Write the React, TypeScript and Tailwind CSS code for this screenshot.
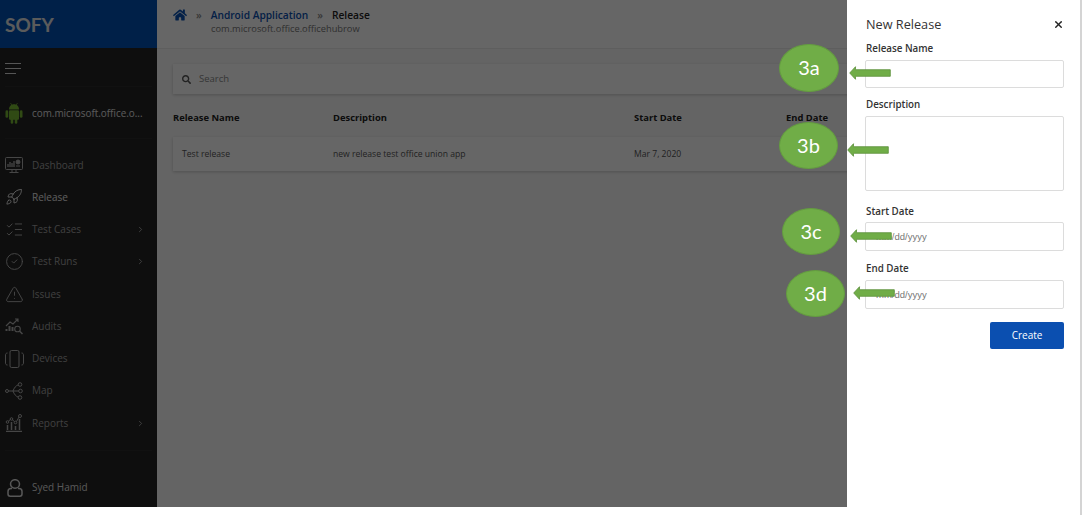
import React from "react";
import { FaHome, FaSearch } from "react-icons/fa";
import { ChevronRight, ListChecks, CircleCheck, TriangleAlert, Rocket, X } from "lucide-react";

const Android = () => (
  <svg width="18" height="21" viewBox="0 0 18 21" fill="#78b833" className="shrink-0">
    <path d="M4 6.500C4 3.500 6 1.300 9 1.300s5 2.200 5 5.200z" />
    <path d="M5.500 0l1.300 2M12.500 0l-1.300 2" stroke="#78b833" strokeWidth="0.7" />
    <rect x="4" y="7.300" width="10" height="9.500" rx="1" />
    <rect x="0.500" y="7.300" width="2.700" height="7.500" rx="1.350" />
    <rect x="14.800" y="7.300" width="2.700" height="7.500" rx="1.350" />
    <rect x="5.700" y="15" width="2.500" height="5.800" rx="1.250" />
    <rect x="9.800" y="15" width="2.500" height="5.800" rx="1.250" />
  </svg>
);
const Dashboard = () => (
  <svg width="18" height="17" viewBox="0 0 18 17" fill="none" stroke="currentColor" strokeWidth="1">
    <rect x="0.5" y="0.5" width="17" height="12" rx="1" />
    <path d="M3 10V7M5 10V5M7 10V6M9 10V4" strokeWidth="1.3" />
    <circle cx="13" cy="5" r="2" fill="currentColor" />
    <path d="M11 9h4M7 13v2M11 13v2M4.5 15.5h9" />
  </svg>
);
const Audits = () => (
  <svg width="18" height="18" viewBox="0 0 18 18" fill="none" stroke="currentColor" strokeWidth="1.1">
    <path d="M1 9l4-4 3 2 5-5M10 2h3v3" />
    <path d="M1.5 14v-2M4.5 14v-5M7.5 14v-4" strokeWidth="2" />
    <circle cx="12.5" cy="12" r="2.8" />
    <path d="M14.5 14l3 3" strokeWidth="1.5" />
  </svg>
);
const Devices = () => (
  <svg width="19" height="18" viewBox="0 0 19 18" fill="none" stroke="currentColor" strokeWidth="1">
    <rect x="5" y="0.5" width="9" height="17" rx="1.5" />
    <path d="M2.5 3C1 3 .5 4 .5 5v8c0 1 .5 2 2 2M16.5 3c1.500 0 2 1 2 2v8c0 1-.5 2-2 2" />
  </svg>
);
const MapIcon = () => (
  <svg width="18" height="18" viewBox="0 0 18 18" fill="none" stroke="currentColor" strokeWidth="1">
    <circle cx="2" cy="9" r="1.500" />
    <circle cx="15" cy="2.500" r="1.800" />
    <circle cx="15.500" cy="9" r="1.800" />
    <circle cx="15" cy="15.500" r="1.800" />
    <path d="M3.500 9h10.200M8 9c1-3 3-5.500 5.300-6.200M8 9c1 3 3 5.500 5.300 6.200" />
  </svg>
);
const Reports = () => (
  <svg width="18" height="18" viewBox="0 0 18 18" fill="none" stroke="currentColor" strokeWidth="1">
    <path d="M1 17.500h16M2.500 16v-5M6.500 16V8M10.500 16v-4M14.500 16V5" strokeWidth="1.500" />
    <circle cx="2.500" cy="8" r="1.300" />
    <circle cx="6.500" cy="5" r="1.300" />
    <circle cx="10.500" cy="8.500" r="1.300" />
    <circle cx="15" cy="2" r="1.500" />
    <path d="M3.500 7l2-1.500M7.500 6l2 1.500M11.500 7.500L14 3" />
  </svg>
);
const UserIcon = () => (
  <svg width="16" height="18" viewBox="0 0 16 18" fill="none" stroke="currentColor" strokeWidth="1.500">
    <ellipse cx="8" cy="5" rx="4.500" ry="4.300" />
    <path d="M5 9.500H4c-2 0-3 1.300-3 3V15c0 1.300.8 2.200 2.200 2.200h9.600c1.400 0 2.200-.9 2.200-2.200v-2.500c0-1.700-1-3-3-3h-1" />
  </svg>
);

const Arrow = ({ className }: { className: string }) => (
  <svg className={className} width="42" height="14" viewBox="0 0 42 14">
    <path d="M.7 7L6.500.7v3h34.800v6.600H6.500v3z" fill="#70ad47" stroke="#5c8f3a" strokeWidth="0.8" />
  </svg>
);

const nav = [
  { label: "Dashboard", icon: <Dashboard /> },
  { label: "Release", icon: <Rocket size={18} strokeWidth={1.3} />, active: true },
  { label: "Test Cases", icon: <ListChecks size={19} strokeWidth={1.2} />, more: true },
  { label: "Test Runs", icon: <CircleCheck size={19} strokeWidth={1.2} />, more: true },
  { label: "Issues", icon: <TriangleAlert size={19} strokeWidth={1.2} /> },
  { label: "Audits", icon: <Audits /> },
  { label: "Devices", icon: <Devices /> },
  { label: "Map", icon: <MapIcon /> },
  { label: "Reports", icon: <Reports />, more: true },
];

const fieldClass =
  "block w-full rounded-[2px] border border-[#dcdcdc] bg-white px-[10px] font-['Liberation_Sans',sans-serif] text-[9.5px] text-[#555] outline-none placeholder:text-[#777]";
const labelClass = "block pl-px text-[9.8px] font-semibold leading-[14px] text-[#333]";
const columns = "grid grid-cols-[160px_301px_152px_1fr]";

const callouts = [
  { text: "3a", circle: "left-[779px] top-[44px] h-[48px] w-[60px]" },
  { text: "3b", circle: "left-[779px] top-[122px] h-[47px] w-[59px]" },
  { text: "3c", circle: "left-[782px] top-[208px] h-[47px] w-[58px]" },
  { text: "3d", circle: "left-[786px] top-[270px] h-[47px] w-[59px]" },
];

export default function App() {
  return (
    <div className="relative h-[515px] w-[1083px] overflow-hidden bg-white font-['Open_Sans',sans-serif]">
      <div className="relative flex h-[507px] w-[1080px] overflow-hidden">
        <aside className="flex h-full w-[157px] shrink-0 flex-col bg-[#242424] text-[#c4c4c4]">
          <div className="flex h-[48px] items-center bg-[#0050b4] pl-[5px] pt-[2px] font-['Lato',sans-serif] text-[19px] font-bold text-[#e4e4e4]">
            SOFY
          </div>
          <div className="mx-[5px] flex h-[39px] flex-col justify-center gap-[4px] border-b border-[#2c2c2c] pt-[3px]">
            <span className="h-px w-[16px] bg-[#d8d8d8]" />
            <span className="h-px w-[16px] bg-[#d8d8d8]" />
            <span className="h-px w-[11px] bg-[#d8d8d8]" />
          </div>
          <div className="mx-[5px] flex h-[52px] items-center gap-[9px] border-b border-[#2c2c2c] pt-[1px] text-[9.9px] text-[#e0e0e0]">
            <Android />
            <span className="truncate">com.microsoft.office.o...</span>
          </div>
          <nav className="mt-[10px] flex flex-col">
            {nav.map((n) => (
              <div key={n.label} className="flex h-[32.25px] items-center pl-[5px] pr-[12px] text-[10px]">
                <span className={`flex w-[27px] shrink-0 ${n.active ? "text-[#e8e8e8]" : "text-[#b0b0b0]"}`}>{n.icon}</span>
                <span className={`flex-1 ${n.active ? "text-[#e8e8e8]" : "text-[#a0a0a0]"}`}>{n.label}</span>
                {n.more && <ChevronRight size={9} className="text-[#bbb]" />}
              </div>
            ))}
          </nav>
          <div className="mx-[5px] mt-[11px] border-b border-[#2c2c2c]" />
          <div className="mt-auto flex h-[39px] items-center gap-[9px] pl-[7px] text-[10px] text-[#dcdcdc]">
            <UserIcon />
            <span>Syed Hamid</span>
          </div>
        </aside>

        <main className="min-w-0 flex-1 bg-[#fafafa]">
          <header className="flex h-[49px] items-start gap-[9px] border-b border-[#eaeaea] bg-white pl-[16px] pt-[8px]">
            <FaHome size={14} className="text-[#0a52b2]" />
            <div>
              <div className="flex items-center gap-[9px] text-[10.2px] font-semibold leading-[14px]">
                <span className="text-[#888]">»</span>
                <span className="text-[#0a4fb0]">Android Application</span>
                <span className="text-[#888]">»</span>
                <span className="text-[#222]">Release</span>
              </div>
              <div className="pl-[15px] text-[9.3px] leading-[14px] text-[#777]">com.microsoft.office.officehubrow</div>
            </div>
          </header>
          <div className="pl-[16px]">
            <div className="mt-[15px] flex h-[30px] items-center gap-[8px] bg-white pl-[9px] text-[9.5px] text-[#888] shadow-[0_1px_3px_rgba(0,0,0,0.2)]">
              <FaSearch size={9} className="text-[#555]" />
              <span>Search</span>
            </div>
            <div className={`${columns} mt-[17px] text-[9.4px] font-bold leading-[14px] text-[#222]`}>
              <span>Release Name</span>
              <span>Description</span>
              <span>Start Date</span>
              <span>End Date</span>
            </div>
            <div className={`${columns} mt-[12px] h-[34px] items-center bg-white pt-[1px] text-[8.6px] text-[#555] shadow-[0_1px_3px_rgba(0,0,0,0.2)]`}>
              <span className="pl-[9px]">Test release</span>
              <span>new release test office union app</span>
              <span>Mar 7, 2020</span>
              <span />
            </div>
          </div>
        </main>

        <div className="absolute inset-0 bg-black/60" />

        <section className="absolute inset-y-0 right-0 w-[233px] bg-white pl-[18px] pr-[16px] pt-[15px]">
          <div className="flex items-center justify-between">
            <h2 className="pl-px text-[12.7px] font-normal leading-[18px] text-[#333]">New Release</h2>
            <X size={11} strokeWidth={3} className="text-[#222]" />
          </div>
          <label className={`${labelClass} mt-[9px]`}>Release Name</label>
          <input className={`${fieldClass} mt-[4px] h-[28px]`} />
          <label className={`${labelClass} mt-[10px]`}>Description</label>
          <textarea className={`${fieldClass} mt-[4px] h-[75px] resize-none`} />
          <label className={`${labelClass} mt-[14px]`}>Start Date</label>
          <input className={`${fieldClass} mt-[3px] h-[29px]`} placeholder="mm/dd/yyyy" />
          <label className={`${labelClass} mt-[11px]`}>End Date</label>
          <input className={`${fieldClass} mt-[4px] h-[29px]`} placeholder="mm/dd/yyyy" />
          <div className="mt-[13px] flex justify-end">
            <button className="h-[27px] w-[74px] rounded-[2px] bg-[#0b4fb0] text-[10px] font-medium text-white">Create</button>
          </div>
        </section>
      </div>

      <div className="absolute inset-y-0 right-px w-[2px] bg-[#d4d4d4]" />

      {callouts.map((c) => (
        <div
          key={c.text}
          className={`absolute flex items-center justify-center rounded-[50%] border border-[#649c40] bg-[#70ad47] pb-[2px] font-['Lato',sans-serif] text-[20px] text-white ${c.circle}`}
        >
          {c.text}
        </div>
      ))}
      <Arrow className="absolute left-[849px] top-[66px]" />
      <Arrow className="absolute left-[847px] top-[143px]" />
      <Arrow className="absolute left-[850px] top-[229px]" />
      <Arrow className="absolute left-[853px] top-[286px]" />
    </div>
  );
}
